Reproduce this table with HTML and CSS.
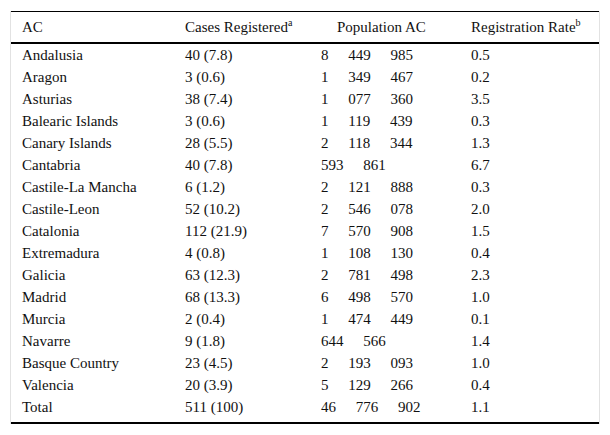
FILE: index.html
```html
<!DOCTYPE html>
<html lang="en">
<head>
<meta charset="utf-8">
<title>Registration by AC</title>
<link rel="stylesheet" href="styles.css">
</head>
<body>
<div class="frame">
<table class="data">
<colgroup>
<col class="c1"><col class="c2"><col class="c3"><col class="c4">
</colgroup>
<thead>
<tr>
<th>AC</th>
<th>Cases Registered<sup>a</sup></th>
<th class="indent">Population AC</th>
<th>Registration Rate<sup>b</sup></th>
</tr>
</thead>
<tbody>
<tr><td>Andalusia</td><td>40 (7.8)</td><td class="pop">8 449 985</td><td>0.5</td></tr>
<tr><td>Aragon</td><td>3 (0.6)</td><td class="pop">1 349 467</td><td>0.2</td></tr>
<tr><td>Asturias</td><td>38 (7.4)</td><td class="pop">1 077 360</td><td>3.5</td></tr>
<tr><td>Balearic Islands</td><td>3 (0.6)</td><td class="pop">1 119 439</td><td>0.3</td></tr>
<tr><td>Canary Islands</td><td>28 (5.5)</td><td class="pop">2 118 344</td><td>1.3</td></tr>
<tr><td>Cantabria</td><td>40 (7.8)</td><td class="pop">593 861</td><td>6.7</td></tr>
<tr><td>Castile-La Mancha</td><td>6 (1.2)</td><td class="pop">2 121 888</td><td>0.3</td></tr>
<tr><td>Castile-Leon</td><td>52 (10.2)</td><td class="pop">2 546 078</td><td>2.0</td></tr>
<tr><td>Catalonia</td><td>112 (21.9)</td><td class="pop">7 570 908</td><td>1.5</td></tr>
<tr><td>Extremadura</td><td>4 (0.8)</td><td class="pop">1 108 130</td><td>0.4</td></tr>
<tr><td>Galicia</td><td>63 (12.3)</td><td class="pop">2 781 498</td><td>2.3</td></tr>
<tr><td>Madrid</td><td>68 (13.3)</td><td class="pop">6 498 570</td><td>1.0</td></tr>
<tr><td>Murcia</td><td>2 (0.4)</td><td class="pop">1 474 449</td><td>0.1</td></tr>
<tr><td>Navarre</td><td>9 (1.8)</td><td class="pop">644 566</td><td>1.4</td></tr>
<tr><td>Basque Country</td><td>23 (4.5)</td><td class="pop">2 193 093</td><td>1.0</td></tr>
<tr><td>Valencia</td><td>20 (3.9)</td><td class="pop">5 129 266</td><td>0.4</td></tr>
<tr class="last"><td>Total</td><td>511 (100)</td><td class="pop">46 776 902</td><td>1.1</td></tr>
</tbody>
</table>
</div>
</body>
</html>
```
FILE: styles.css
```css
html, body {
  margin: 0;
  padding: 0;
  background: #ffffff;
}
body {
  font-family: "Liberation Serif", "Times New Roman", serif;
  font-size: 15px;
  color: #111111;
}
.frame {
  margin: 11px 0 0 10px;
  width: 588px;
  border-left: 1px solid #e2e2e2;
  border-right: 1px solid #e2e2e2;
}
.data {
  width: 100%;
  border-collapse: collapse;
  border-top: 1px solid #000;
  border-bottom: 2px solid #000;
}
.c1 { width: 163px; }
.c2 { width: 136px; }
.c3 { width: 150px; }
.c4 { width: 139px; }
.data th {
  font-weight: normal;
  text-align: left;
  padding: 0 11px;
  height: 30px;
  line-height: 18px;
  vertical-align: middle;
  border-bottom: 2px solid #000;
  white-space: nowrap;
}
.data th.indent {
  padding-left: 27px;
}
.data sup {
  font-size: 10px;
  line-height: 0;
  vertical-align: 6px;
}
.data td {
  padding: 0 11px;
  height: 22px;
  line-height: 18px;
  vertical-align: middle;
  white-space: nowrap;
}
.data tr.last td {
  height: 22px;
  padding-bottom: 4px;
}
.data td.pop {
  word-spacing: 16px;
}
```
